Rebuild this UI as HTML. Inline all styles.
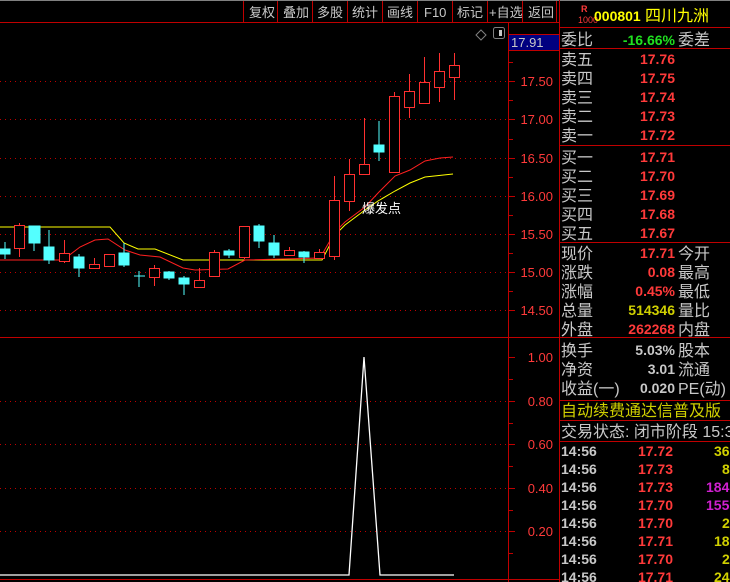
<!DOCTYPE html>
<html><head><meta charset="utf-8"><style>
html,body{margin:0;padding:0;background:#000;width:730px;height:582px;overflow:hidden}
svg{display:block}
text{font-family:"Liberation Sans","Noto Sans CJK SC","WenQuanYi Zen Hei",sans-serif}
.tb{fill:#c8c8c8;font-size:13px}
.ax{fill:#ff3a3a;font-size:13px;text-anchor:end}
.lb{fill:#c8c8c8;font-size:16px}
.v{fill:#ff3a3a;font-size:14px;font-weight:bold;text-anchor:end}
.tm{fill:#c8c8c8;font-size:14px;font-weight:bold}
</style></head><body>
<svg width="730" height="582" viewBox="0 0 730 582">
<rect width="730" height="582" fill="#000"/>
<line x1="0" y1="0.5" x2="730" y2="0.5" stroke="#808080"/>
<!-- toolbar -->
<g stroke="#c00000" stroke-width="1">
<line x1="0" y1="22.5" x2="560" y2="22.5"/>
<line x1="243.5" y1="1" x2="243.5" y2="22"/><line x1="277.5" y1="1" x2="277.5" y2="22"/>
<line x1="312.5" y1="1" x2="312.5" y2="22"/><line x1="347.5" y1="1" x2="347.5" y2="22"/>
<line x1="382.5" y1="1" x2="382.5" y2="22"/><line x1="417.5" y1="1" x2="417.5" y2="22"/>
<line x1="452.5" y1="1" x2="452.5" y2="22"/><line x1="487.5" y1="1" x2="487.5" y2="22"/>
<line x1="522.5" y1="1" x2="522.5" y2="22"/><line x1="556.5" y1="1" x2="556.5" y2="22"/>
</g>
<g class="tb">
<text x="249" y="17">复权</text><text x="283" y="17">叠加</text><text x="317" y="17">多股</text>
<text x="352" y="17">统计</text><text x="387" y="17">画线</text><text x="424" y="17">F10</text>
<text x="457" y="17">标记</text><text x="489" y="17">+自选</text><text x="528" y="17">返回</text>
</g>
<!-- grid -->
<g stroke="#c00000" stroke-dasharray="1,4" stroke-width="1">
<line x1="0" y1="81.5" x2="508" y2="81.5"/><line x1="0" y1="119.5" x2="508" y2="119.5"/>
<line x1="0" y1="158.5" x2="508" y2="158.5"/><line x1="0" y1="196.5" x2="508" y2="196.5"/>
<line x1="0" y1="234.5" x2="508" y2="234.5"/><line x1="0" y1="272.5" x2="508" y2="272.5"/>
<line x1="0" y1="310.5" x2="508" y2="310.5"/>
<line x1="0" y1="401.5" x2="508" y2="401.5"/><line x1="0" y1="444.5" x2="508" y2="444.5"/>
<line x1="0" y1="488.5" x2="508" y2="488.5"/><line x1="0" y1="531.5" x2="508" y2="531.5"/>
</g>
<g stroke="#c00000">
<line x1="0" y1="337.5" x2="560" y2="337.5"/>
<line x1="508.5" y1="22" x2="508.5" y2="582"/>
<line x1="559.5" y1="0" x2="559.5" y2="582"/>
<line x1="0" y1="579.5" x2="560" y2="579.5"/>
</g>
<!-- axis ticks -->
<g stroke="#c00000">
<line x1="508" y1="62.5" x2="513" y2="62.5"/><line x1="508" y1="81.5" x2="515" y2="81.5"/>
<line x1="508" y1="100.5" x2="513" y2="100.5"/><line x1="508" y1="119.5" x2="515" y2="119.5"/>
<line x1="508" y1="139.5" x2="513" y2="139.5"/><line x1="508" y1="158.5" x2="515" y2="158.5"/>
<line x1="508" y1="177.5" x2="513" y2="177.5"/><line x1="508" y1="196.5" x2="515" y2="196.5"/>
<line x1="508" y1="215.5" x2="513" y2="215.5"/><line x1="508" y1="234.5" x2="515" y2="234.5"/>
<line x1="508" y1="253.5" x2="513" y2="253.5"/><line x1="508" y1="272.5" x2="515" y2="272.5"/>
<line x1="508" y1="291.5" x2="513" y2="291.5"/><line x1="508" y1="310.5" x2="515" y2="310.5"/>
<line x1="508" y1="357.5" x2="515" y2="357.5"/><line x1="508" y1="379.5" x2="513" y2="379.5"/>
<line x1="508" y1="401.5" x2="515" y2="401.5"/><line x1="508" y1="423.5" x2="513" y2="423.5"/>
<line x1="508" y1="444.5" x2="515" y2="444.5"/><line x1="508" y1="466.5" x2="513" y2="466.5"/>
<line x1="508" y1="488.5" x2="515" y2="488.5"/><line x1="508" y1="510.5" x2="513" y2="510.5"/>
<line x1="508" y1="531.5" x2="515" y2="531.5"/><line x1="508" y1="553.5" x2="513" y2="553.5"/>
</g>
<g class="ax">
<text x="553" y="86">17.50</text><text x="553" y="124">17.00</text><text x="553" y="163">16.50</text>
<text x="553" y="201">16.00</text><text x="553" y="239">15.50</text><text x="553" y="277">15.00</text>
<text x="553" y="315">14.50</text>
<text x="553" y="362">1.00</text><text x="553" y="406">0.80</text><text x="553" y="449">0.60</text>
<text x="553" y="493">0.40</text><text x="553" y="536">0.20</text>
</g>
<rect x="509" y="34" width="50" height="16" fill="#000080"/>
<line x1="509" y1="34.5" x2="559" y2="34.5" stroke="#c00000"/><line x1="509" y1="50.5" x2="559" y2="50.5" stroke="#c00000"/>
<text x="511" y="47" fill="#c8c8c8" font-size="13">17.91</text>
<path d="M481 30 L486 35 L481 40 L476 35 Z" fill="none" stroke="#808080"/>
<rect x="493.5" y="27.5" width="11" height="11" fill="none" stroke="#808080" rx="2"/>
<rect x="499" y="30" width="3" height="6" fill="#c8c8c8"/>
<!-- MA lines -->
<polyline fill="none" stroke="#ffff00" points="0,227 110,227 124,243 138,249 155,249 183,260 322,260 335,235 345,225 365,210 378,201 395,191 410,183 425,177 453,174"/>
<polyline fill="none" stroke="#ff2020" points="0,260 63,260 80,247 95,240 108,239 125,250 140,255 160,257 183,268 195,270 228,269 245,260 320,258 335,232 345,222 365,207 379,192 395,176 410,170 425,161 440,158 453,157"/>
<!-- candles -->
<g stroke="#54ffff" fill="#54ffff">
<line x1="5" y1="242" x2="5" y2="259"/><rect x="0" y="249" width="10" height="5"/>
<line x1="34" y1="226" x2="34" y2="251"/><rect x="29" y="226" width="11" height="17"/>
<line x1="49" y1="230" x2="49" y2="264"/><rect x="44" y="247" width="10" height="13"/>
<line x1="79" y1="254" x2="79" y2="277"/><rect x="74" y="257" width="10" height="11"/>
<line x1="124" y1="243" x2="124" y2="267"/><rect x="119" y="253" width="10" height="12"/>
<line x1="139" y1="271" x2="139" y2="287"/><line x1="134" y1="276" x2="145" y2="276"/>
<line x1="169" y1="271" x2="169" y2="280"/><rect x="164" y="272" width="10" height="6"/>
<line x1="184" y1="276" x2="184" y2="295"/><rect x="179" y="278" width="10" height="6"/>
<line x1="229" y1="249" x2="229" y2="258"/><rect x="224" y="251" width="10" height="4"/>
<line x1="259" y1="224" x2="259" y2="248"/><rect x="254" y="226" width="10" height="15"/>
<line x1="274" y1="235" x2="274" y2="258"/><rect x="269" y="243" width="10" height="12"/>
<line x1="304" y1="251" x2="304" y2="263"/><rect x="299" y="252" width="10" height="5"/>
<line x1="379" y1="121" x2="379" y2="161"/><rect x="374" y="145" width="10" height="7"/>
</g>
<g stroke="#ff3030" fill="none">
<line x1="19.5" y1="223" x2="19.5" y2="257"/><rect x="14.5" y="225.5" width="10" height="23" fill="#000"/>
<line x1="64.5" y1="240" x2="64.5" y2="263"/><rect x="59.5" y="253.5" width="10" height="8" fill="#000"/>
<line x1="94.5" y1="258" x2="94.5" y2="268"/><rect x="89.5" y="264.5" width="10" height="4" fill="#000"/>
<rect x="104.5" y="254.5" width="10" height="12" fill="#000"/>
<line x1="154.5" y1="265" x2="154.5" y2="286"/><rect x="149.5" y="268.5" width="10" height="9" fill="#000"/>
<line x1="199.5" y1="268" x2="199.5" y2="287"/><rect x="194.5" y="280.5" width="10" height="7" fill="#000"/>
<line x1="214.5" y1="250" x2="214.5" y2="277"/><rect x="209.5" y="252.5" width="10" height="24" fill="#000"/>
<line x1="244.5" y1="226" x2="244.5" y2="259"/><rect x="239.5" y="226.5" width="10" height="31" fill="#000"/>
<line x1="289.5" y1="247" x2="289.5" y2="255"/><rect x="284.5" y="250.5" width="10" height="5" fill="#000"/>
<line x1="319.5" y1="249" x2="319.5" y2="258"/><rect x="314.5" y="252.5" width="10" height="6" fill="#000"/>
<line x1="334.5" y1="176" x2="334.5" y2="260"/><rect x="329.5" y="200.5" width="10" height="56" fill="#000"/>
<line x1="349.5" y1="159" x2="349.5" y2="211"/><rect x="344.5" y="174.5" width="10" height="27" fill="#000"/>
<line x1="364.5" y1="118" x2="364.5" y2="164"/><rect x="359.5" y="164.5" width="10" height="10" fill="#000"/>
<line x1="394.5" y1="92" x2="394.5" y2="172"/><rect x="389.5" y="96.5" width="10" height="76" fill="#000"/>
<line x1="409.5" y1="74" x2="409.5" y2="118"/><rect x="404.5" y="91.5" width="10" height="16" fill="#000"/>
<line x1="424.5" y1="57" x2="424.5" y2="103"/><rect x="419.5" y="82.5" width="10" height="21" fill="#000"/>
<line x1="439.5" y1="53" x2="439.5" y2="102"/><rect x="434.5" y="71.5" width="10" height="16" fill="#000"/>
<line x1="454.5" y1="53" x2="454.5" y2="100"/><rect x="449.5" y="65.5" width="10" height="12" fill="#000"/>
</g>
<text x="362" y="213" fill="#fff" font-size="13">爆发点</text>
<!-- indicator -->
<polyline fill="none" stroke="#fff" stroke-width="1.3" points="0,575 349,575 364,357 380,575 454,575"/>
<!-- right panel -->
<g stroke="#c00000">
<line x1="560" y1="27.5" x2="730" y2="27.5"/><line x1="560" y1="48.5" x2="730" y2="48.5"/>
<line x1="560" y1="145.5" x2="730" y2="145.5"/><line x1="560" y1="242.5" x2="730" y2="242.5"/>
<line x1="560" y1="337.5" x2="730" y2="337.5"/><line x1="560" y1="400.5" x2="730" y2="400.5"/>
<line x1="560" y1="420.5" x2="730" y2="420.5"/><line x1="560" y1="441.5" x2="730" y2="441.5"/>
</g>
<text x="581" y="12" fill="#ff3a3a" font-size="9" font-weight="bold">R</text>
<text x="578" y="23" fill="#ff3a3a" font-size="9">1000</text>
<text x="594" y="21" fill="#ffff00" font-size="14" font-weight="bold">000801</text>
<text x="645" y="21" fill="#ffff00" font-size="16">四川九洲</text>
<text x="561" y="45" class="lb">委比</text>
<text x="675" y="45" fill="#20e020" font-size="14" font-weight="bold" text-anchor="end">-16.66%</text>
<text x="678" y="45" class="lb">委差</text>
<g class="lb">
<text x="561" y="65">卖五</text><text x="561" y="84">卖四</text><text x="561" y="103">卖三</text><text x="561" y="122">卖二</text><text x="561" y="141">卖一</text>
<text x="561" y="163">买一</text><text x="561" y="182">买二</text><text x="561" y="201">买三</text><text x="561" y="220">买四</text><text x="561" y="239">买五</text>
<text x="561" y="259">现价</text><text x="561" y="278">涨跌</text><text x="561" y="297">涨幅</text><text x="561" y="316">总量</text><text x="561" y="335">外盘</text>
<text x="678" y="259">今开</text><text x="678" y="278">最高</text><text x="678" y="297">最低</text><text x="678" y="316">量比</text><text x="678" y="335">内盘</text>
<text x="561" y="356">换手</text><text x="561" y="375">净资</text><text x="561" y="394">收益(一)</text>
<text x="678" y="356">股本</text><text x="678" y="375">流通</text><text x="678" y="394">PE(动)</text>
<text x="561" y="437">交易状态: 闭市阶段 15:3</text>
</g>
<text x="561" y="416" fill="#d0d000" font-size="16">自动续费通达信普及版</text>
<g class="v">
<text x="675" y="64">17.76</text><text x="675" y="83">17.75</text><text x="675" y="102">17.74</text><text x="675" y="121">17.73</text><text x="675" y="140">17.72</text>
<text x="675" y="162">17.71</text><text x="675" y="181">17.70</text><text x="675" y="200">17.69</text><text x="675" y="219">17.68</text><text x="675" y="238">17.67</text>
<text x="675" y="258">17.71</text><text x="675" y="277">0.08</text><text x="675" y="296">0.45%</text>
<text x="675" y="315" fill="#d0d000">514346</text><text x="675" y="334">262268</text>
<text x="675" y="355" fill="#c8c8c8">5.03%</text><text x="675" y="374" fill="#c8c8c8">3.01</text><text x="675" y="393" fill="#c8c8c8">0.020</text>
</g>
<g class="tm">
<text x="561" y="456">14:56</text><text x="561" y="474">14:56</text><text x="561" y="492">14:56</text><text x="561" y="510">14:56</text>
<text x="561" y="528">14:56</text><text x="561" y="546">14:56</text><text x="561" y="564">14:56</text><text x="561" y="582">14:56</text>
</g>
<g fill="#ff3a3a" font-size="14" font-weight="bold" text-anchor="end">
<text x="673" y="456">17.72</text><text x="673" y="474">17.73</text><text x="673" y="492">17.73</text><text x="673" y="510">17.70</text>
<text x="673" y="528">17.70</text><text x="673" y="546">17.71</text><text x="673" y="564">17.70</text><text x="673" y="582">17.71</text>
</g>
<g font-size="14" font-weight="bold">
<text x="714" y="456" fill="#d0d000">36</text><text x="722" y="474" fill="#d0d000">8</text>
<text x="706" y="492" fill="#d020d0">184</text><text x="706" y="510" fill="#d020d0">155</text>
<text x="722" y="528" fill="#d0d000">2</text><text x="714" y="546" fill="#d0d000">18</text>
<text x="722" y="564" fill="#d0d000">2</text><text x="714" y="582" fill="#d0d000">24</text>
</g>
</svg>
</body></html>
